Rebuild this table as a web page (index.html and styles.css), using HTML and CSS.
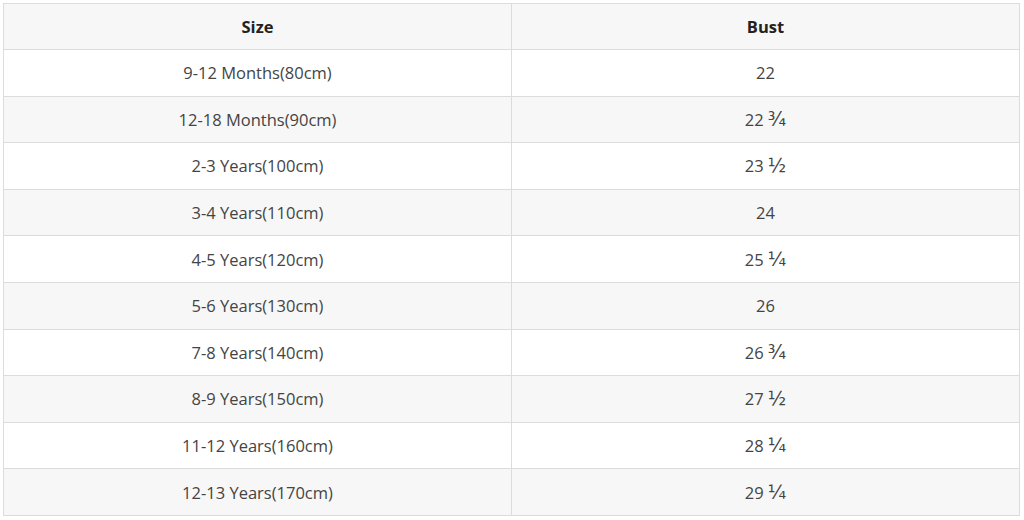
FILE: index.html
```html
<!DOCTYPE html>
<html>
<head>
<meta charset="utf-8">
<link rel="stylesheet" href="styles.css">
</head>
<body>
<table class="size-table">
  <thead>
    <tr><th>Size</th><th>Bust</th></tr>
  </thead>
  <tbody>
    <tr><td>9-12 Months(80cm)</td><td>22</td></tr>
    <tr><td>12-18 Months(90cm)</td><td>22 <span class="frac">¾</span></td></tr>
    <tr><td>2-3 Years(100cm)</td><td>23 <span class="frac">½</span></td></tr>
    <tr><td>3-4 Years(110cm)</td><td>24</td></tr>
    <tr><td>4-5 Years(120cm)</td><td>25 <span class="frac">¼</span></td></tr>
    <tr><td>5-6 Years(130cm)</td><td>26</td></tr>
    <tr><td>7-8 Years(140cm)</td><td>26 <span class="frac">¾</span></td></tr>
    <tr><td>8-9 Years(150cm)</td><td>27 <span class="frac">½</span></td></tr>
    <tr><td>11-12 Years(160cm)</td><td>28 <span class="frac">¼</span></td></tr>
    <tr><td>12-13 Years(170cm)</td><td>29 <span class="frac">¼</span></td></tr>
  </tbody>
</table>
</body>
</html>
```
FILE: styles.css
```css
html, body {
  margin: 0;
  padding: 0;
  background: #ffffff;
}
body {
  padding: 3px 0 0 3px;
  font-family: "Open Sans", "Noto Sans", sans-serif;
}
.size-table {
  width: 1017px;
  border-collapse: collapse;
  table-layout: fixed;
}
.size-table th,
.size-table td {
  border: 1px solid #dcdcdc;
  height: 45.6px;
  padding: 0;
  text-align: center;
  vertical-align: middle;
  font-size: 16.5px;
  color: #444;
}
.size-table th {
  height: 45px;
  font-weight: 700;
  color: #222;
  background: #f7f7f7;
}
.size-table tbody tr:nth-child(even) td {
  background: #f7f7f7;
}
.frac {
  font-family: "DejaVu Sans", sans-serif;
  font-size: 19px;
  line-height: 1;
  color: #444;
}
```
